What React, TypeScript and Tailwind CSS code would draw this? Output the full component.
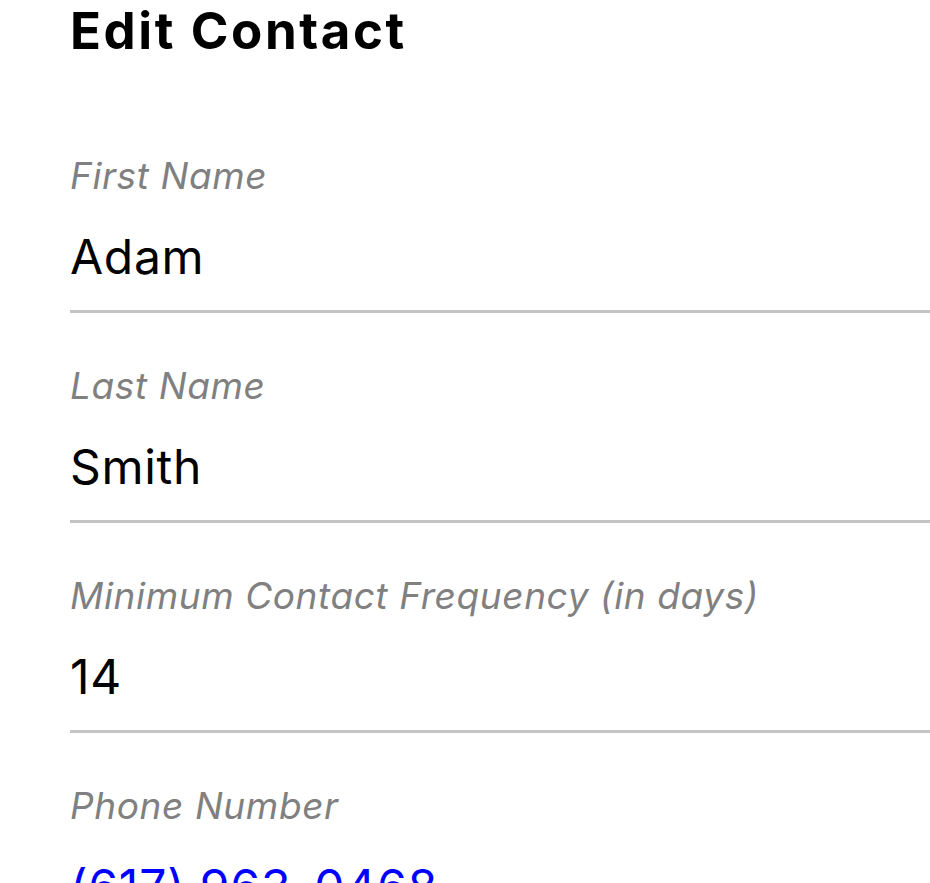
import React from "react";

const font = { fontFamily: "Inter, 'Noto Sans', sans-serif" };

function Field({ label, value }: { label: string; value: string }) {
  return (
    <div className="pt-[55px] border-b-[3px] border-[#c4c4c4]">
      <div className="text-[37px] leading-[36px] italic tracking-[0.6px] text-[#808080]">{label}</div>
      <div className="mt-[40px] mb-[30px] text-[48px] leading-[46px] tracking-[0.7px] text-black">{value}</div>
    </div>
  );
}

export default function App() {
  return (
    <div className="w-[930px] h-[883px] overflow-hidden bg-white" style={font}>
      <div className="pl-[70px]">
        <div className="pt-[5px] h-[103px]">
          <h1 className="text-[51px] leading-[52px] font-bold tracking-[2.6px] text-black">Edit Contact</h1>
        </div>
        <Field label="First Name" value="Adam" />
        <Field label="Last Name" value="Smith" />
        <Field label="Minimum Contact Frequency (in days)" value="14" />
        <div className="pt-[55px]">
          <div className="text-[37px] leading-[36px] italic tracking-[0.6px] text-[#808080]">Phone Number</div>
          <div className="mt-[40px] text-[48px] leading-[46px] tracking-[0.8px] text-[#0000ff]">(617) 963-0468</div>
        </div>
      </div>
    </div>
  );
}
